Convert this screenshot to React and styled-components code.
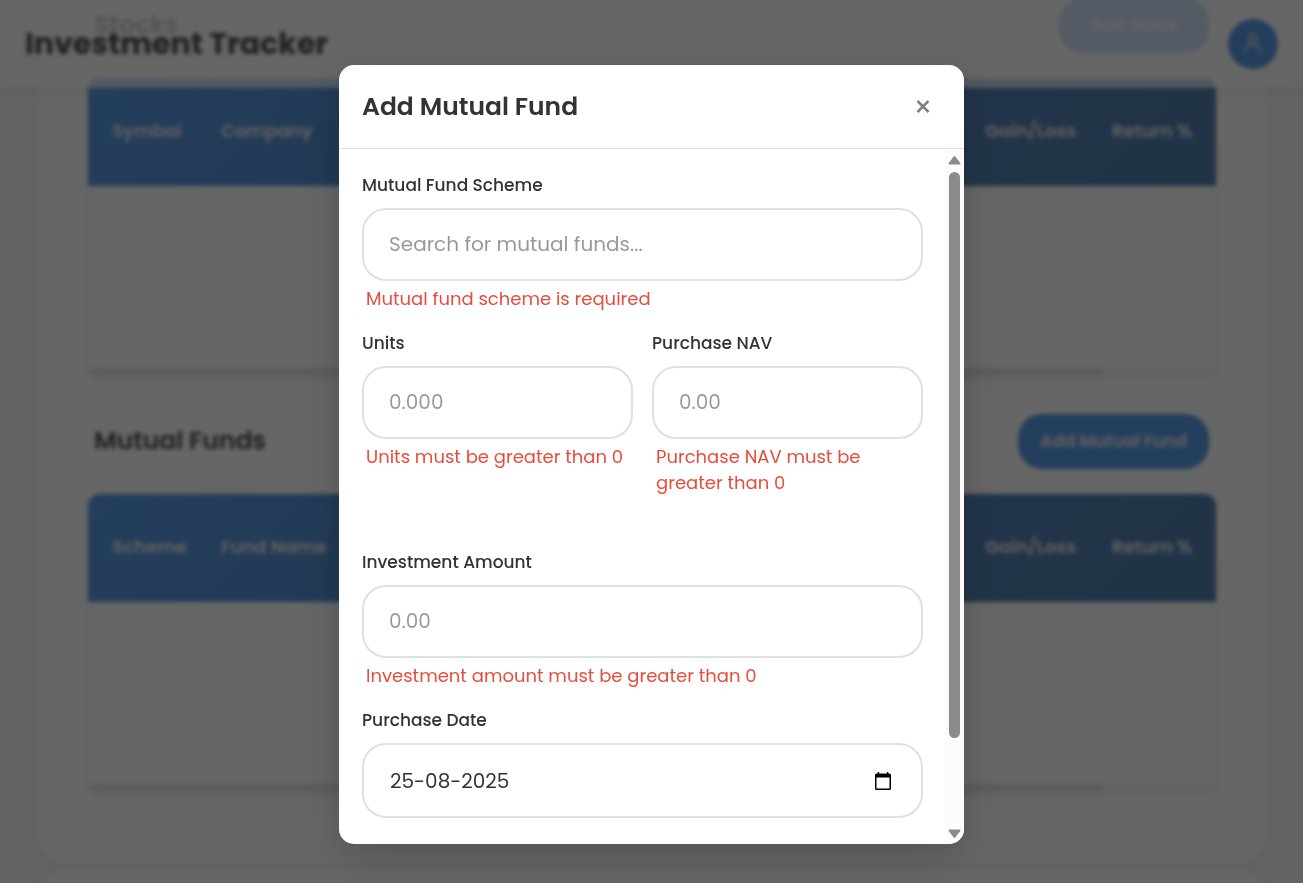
import React from "react";
import styled, { createGlobalStyle } from "styled-components";

const GlobalStyle = createGlobalStyle`
  * { box-sizing: border-box; }
  body {
    margin: 0;
    overflow: hidden;
    background: #f7f7f7;
    color: #333;
    font-family: Poppins, Inter, "Noto Sans", sans-serif;
  }
  button, input { font-family: inherit; }
`;

const Page = styled.div`
  height: 100vh;
  overflow: hidden;
  color: #505050;
`;

const TopBar = styled.header`
  position: fixed;
  inset: 0 0 auto 0;
  display: flex;
  align-items: center;
  justify-content: space-between;
  height: 88px;
  padding: 0 25px;
  background: rgba(255, 255, 255, 0.72);
  box-shadow: 0 2px 10px rgba(0, 0, 0, 0.08);
`;

const Brand = styled.h1`
  margin: 0;
  font-size: 30px;
  font-weight: 700;
  line-height: 44px;
`;

const Avatar = styled.button`
  display: grid;
  place-items: center;
  width: 50px;
  height: 50px;
  padding: 0;
  border: 0;
  border-radius: 50%;
  background: #5a9de8;
  color: #ddd;
`;

const Main = styled.main`
  display: flex;
  flex-direction: column;
  gap: 2px;
  margin-top: -32px;
  padding: 0 37px 0 38px;
`;

const Card = styled.div`
  display: flex;
  flex-direction: column;
  gap: 38px;
  min-height: 120px;
  padding: 30px 50px 74px;
  border-radius: 30px;
  background: #fff;
  box-shadow: 0 2px 12px rgba(0, 0, 0, 0.06);
`;

const Section = styled.section`
  display: flex;
  flex-direction: column;
  gap: 25px;
`;

const SectionHead = styled.div`
  display: flex;
  align-items: center;
  justify-content: space-between;
  padding: 0 7px 0 6px;
`;

const SectionTitle = styled.h2`
  margin: 0;
  padding-bottom: 2px;
  font-size: 25px;
  font-weight: 600;
  line-height: 38px;
`;

const AddButton = styled.button`
  min-width: 150px;
  height: 55px;
  padding: 0 22px 2px;
  border: 0;
  border-radius: 24px;
  background: #5a9de8;
  color: #eee;
  font-size: 17px;
  font-weight: 600;
`;

const TableBox = styled.div`
  overflow: hidden;
  border-radius: 12px;
  background: #fff;
  box-shadow: 0 2px 10px rgba(0, 0, 0, 0.08);
`;

const Table = styled.table`
  width: 100%;
  border-collapse: collapse;
  table-layout: fixed;
  background: linear-gradient(135deg, #5a9de8 0%, #5484be 60%, #55829f 140%);
`;

const Th = styled.th`
  width: ${(p) => (p.$width ? `${p.$width}px` : "auto")};
  height: 108px;
  padding: 0 0 4px 24px;
  color: #eee;
  font-size: 18px;
  font-weight: 600;
  text-align: left;
  white-space: nowrap;
`;

const TableSpace = styled.div`
  height: 182px;
`;

const HScroll = styled.div`
  height: 8px;
  background: #f8f8f8;
`;

const HThumb = styled.div`
  width: 90%;
  height: 8px;
  border-radius: 4px;
  background: #e6e6e6;
`;

const Overlay = styled.div`
  position: fixed;
  inset: 0;
  display: flex;
  justify-content: center;
  padding: 65px 20px 39px;
  background: rgba(0, 0, 0, 0.6);
  backdrop-filter: blur(2px);
`;

const Modal = styled.div`
  display: flex;
  flex-direction: column;
  width: 100%;
  max-width: 625px;
  overflow: hidden;
  border-radius: 15px;
  background: #fff;
  box-shadow: 0 12px 40px rgba(0, 0, 0, 0.2);
`;

const ModalHead = styled.div`
  display: flex;
  flex: none;
  align-items: center;
  justify-content: space-between;
  height: 84px;
  padding: 0 34px 0 23px;
  border-bottom: 1px solid #e0e0e0;
`;

const ModalTitle = styled.h2`
  margin: 0;
  font-size: 25px;
  font-weight: 600;
  line-height: 38px;
`;

const CloseButton = styled.button`
  display: grid;
  padding: 0;
  border: 0;
  background: none;
  color: #808080;
`;

const ModalBody = styled.div`
  display: flex;
  flex: 1;
  min-height: 0;
`;

const Form = styled.form`
  display: flex;
  flex: 1;
  flex-direction: column;
  gap: 18px;
  min-width: 0;
  overflow: hidden;
  padding: 23px 22px 23px 23px;
`;

const FieldRow = styled.div`
  display: grid;
  grid-template-columns: 1fr 1fr;
  gap: 19px;
  padding-bottom: 35px;
`;

const Field = styled.div`
  display: flex;
  flex-direction: column;
  min-width: 0;
`;

const Label = styled.label`
  margin-bottom: 10px;
  font-size: 17px;
  font-weight: 500;
  line-height: 26px;
`;

const Input = styled.input`
  width: 100%;
  height: 73px;
  padding: 0 25px 1px;
  border: 2px solid #e0e0e0;
  border-radius: 24px;
  outline: none;
  background: #fff;
  color: #333;
  font-size: 20px;
  &::placeholder { color: #999; opacity: 1; }
`;

const FieldError = styled.span`
  margin-top: 5px;
  padding-left: 4px;
  color: #e74c3c;
  font-size: 18px;
  line-height: 26px;
`;

const DateBox = styled.div`
  display: flex;
  align-items: center;
  height: 75px;
  padding: 0 30px 0 26px;
  border: 2px solid #e0e0e0;
  border-radius: 24px;
`;

const DateInput = styled.input`
  flex: 1;
  min-width: 0;
  padding: 0;
  border: 0;
  outline: none;
  background: none;
  color: #333;
  font-size: 20px;
`;

const CalendarButton = styled.button`
  display: grid;
  padding: 0;
  border: 0;
  background: none;
  color: #000;
`;

const ScrollTrack = styled.div`
  display: flex;
  flex: none;
  flex-direction: column;
  align-items: center;
  gap: 7px;
  width: 19px;
  padding: 6px 0 5px;
  background: #fcfcfc;
`;

const ScrollRange = styled.div`
  flex: 1;
  width: 11px;
`;

const ScrollThumb = styled.div`
  width: 11px;
  height: 87%;
  border-radius: 6px;
  background: #8b8b8b;
`;

const Arrow = ({ d }) => (
  <svg width="13" height="10" viewBox="0 0 13 10" aria-hidden="true">
    <path d={d} fill="#8b8b8b" stroke="#8b8b8b" strokeWidth="2" strokeLinejoin="round" />
  </svg>
);

function Holdings({ title, action, columns }) {
  const widths = [109, null, 127, 128];
  return (
    <Section>
      <SectionHead>
        <SectionTitle>{title}</SectionTitle>
        <AddButton type="button">{action}</AddButton>
      </SectionHead>
      <TableBox>
        <Table>
          <thead>
            <tr>
              {columns.map((name, i) => (
                <Th key={name} $width={widths[i]}>{name}</Th>
              ))}
            </tr>
          </thead>
        </Table>
        <TableSpace />
        <HScroll><HThumb /></HScroll>
      </TableBox>
    </Section>
  );
}

function FormField({ id, label, placeholder, error }) {
  return (
    <Field>
      <Label htmlFor={id}>{label}</Label>
      <Input id={id} type="text" placeholder={placeholder} aria-describedby={`${id}-error`} />
      <FieldError id={`${id}-error`}>{error}</FieldError>
    </Field>
  );
}

export default function App() {
  return (
    <>
      <GlobalStyle />
      <Page>
        <Main>
          <Card>
            <Holdings title="Stocks" action="Add Stock" columns={["Symbol", "Company", "Gain/Loss", "Return %"]} />
            <Holdings title="Mutual Funds" action="Add Mutual Fund" columns={["Scheme", "Fund Name", "Gain/Loss", "Return %"]} />
          </Card>
          <Card />
        </Main>
        <TopBar>
          <Brand>Investment Tracker</Brand>
          <Avatar type="button" aria-label="Account">
            <svg width="24" height="24" viewBox="0 0 24 24" fill="none" stroke="currentColor" strokeWidth="2" strokeLinecap="round">
              <circle cx="12" cy="7" r="4" />
              <path d="M4 20c1-4 4-8 8-8s7 4 8 8" />
            </svg>
          </Avatar>
        </TopBar>
      </Page>
      <Overlay>
        <Modal role="dialog" aria-modal="true" aria-labelledby="modal-title">
          <ModalHead>
            <ModalTitle id="modal-title">Add Mutual Fund</ModalTitle>
            <CloseButton type="button" aria-label="Close">
              <svg width="14" height="14" viewBox="0 0 14 14" fill="none" stroke="currentColor" strokeWidth="2.500">
                <path d="M1.500 1l11 11M12.500 1l-11 11" />
              </svg>
            </CloseButton>
          </ModalHead>
          <ModalBody>
            <Form>
              <FormField id="scheme" label="Mutual Fund Scheme" placeholder="Search for mutual funds..." error="Mutual fund scheme is required" />
              <FieldRow>
                <FormField id="units" label="Units" placeholder="0.000" error="Units must be greater than 0" />
                <FormField id="nav" label="Purchase NAV" placeholder="0.00" error="Purchase NAV must be greater than 0" />
              </FieldRow>
              <FormField id="amount" label="Investment Amount" placeholder="0.00" error="Investment amount must be greater than 0" />
              <Field>
                <Label htmlFor="date">Purchase Date</Label>
                <DateBox>
                  <DateInput id="date" type="text" defaultValue="25-08-2025" />
                  <CalendarButton type="button" aria-label="Choose date">
                    <svg width="16" height="18" viewBox="0 0 16 18">
                      <path fill="currentColor" fillRule="evenodd" d="M2.700 0h1.400v1.500h7.800V0h1.400v1.500h1.200A1.500 1.500 0 0 1 16 3v13.500a1.500 1.500 0 0 1-1.500 1.500h-13A1.500 1.500 0 0 1 0 16.500V3a1.500 1.500 0 0 1 1.500-1.500h1.200zM1.500 5.500v11h13v-11z" />
                    </svg>
                  </CalendarButton>
                </DateBox>
              </Field>
            </Form>
            <ScrollTrack aria-hidden="true">
              <Arrow d="M6.500 2L11.500 8.500H1.500Z" />
              <ScrollRange><ScrollThumb /></ScrollRange>
              <Arrow d="M6.500 8L11.500 1.500H1.500Z" />
            </ScrollTrack>
          </ModalBody>
        </Modal>
      </Overlay>
    </>
  );
}
